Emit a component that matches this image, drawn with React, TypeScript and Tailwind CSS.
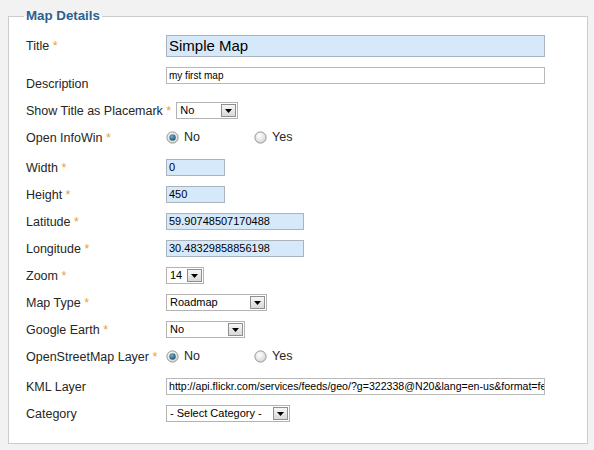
import React from "react";

const Label = ({ text, req, className = "" }: { text: string; req?: boolean; className?: string }) => (
  <div className={"min-w-[138px] mr-[4px] pl-[2px] shrink-0 whitespace-nowrap leading-[16px] text-[12.5px] text-[#262626] " + className}>
    {text}
    {req && <span className="text-[#e6a13c]"> *</span>}
  </div>
);

const TextBox = ({ value, w, blue = true, small = false }: { value: string; w: string; blue?: boolean; small?: boolean }) => (
  <div
    className={
      "h-[17px] pl-[2px] overflow-hidden whitespace-nowrap leading-[15px] text-black border " +
      w +
      (small ? " text-[10.6px]" : " text-[11px]") +
      (blue ? " bg-[#d6e9fb] border-[#a9b4bf]" : " bg-white border-[#b9b9b9]")
    }
  >
    {value}
  </div>
);

const Select = ({ value, w }: { value: string; w: string }) => (
  <div className={"h-[17px] flex border border-[#b3b3b3] bg-white " + w}>
    <div className="flex-1 pl-[3px] text-[11px] leading-[15px] text-black whitespace-nowrap overflow-hidden">
      {value}
    </div>
    <div className="m-[1px] w-[15px] border border-[#8f8f8f] bg-gradient-to-b from-[#f7f7f7] to-[#d9d9d9] flex items-center justify-center">
      <svg width="7" height="4" viewBox="0 0 7 4" className="mt-[1px]">
        <path d="M0 0h7L3.5 4z" fill="#000" />
      </svg>
    </div>
  </div>
);

const Radio = ({ checked }: { checked?: boolean }) => (
  <svg width="13" height="13" viewBox="0 0 13 13">
    <defs>
      <radialGradient id="rg" cx="40%" cy="35%" r="70%">
        <stop offset="0" stopColor="#ffffff" />
        <stop offset="1" stopColor="#d4d4d4" />
      </radialGradient>
      <radialGradient id="rd" cx="40%" cy="35%" r="70%">
        <stop offset="0" stopColor="#6fb0d2" />
        <stop offset="1" stopColor="#1c4c68" />
      </radialGradient>
    </defs>
    <circle cx="6.5" cy="6.5" r="5.6" fill="url(#rg)" stroke="#959595" strokeWidth="1" />
    {checked && <circle cx="6.5" cy="6.5" r="3.2" fill="url(#rd)" />}
  </svg>
);

const RadioPair = () => (
  <div className="flex items-center text-[12.5px] text-[#262626]">
    <div className="w-[88px] flex items-center gap-[5px]">
      <Radio checked />
      <span>No</span>
    </div>
    <div className="flex items-center gap-[5px]">
      <Radio />
      <span>Yes</span>
    </div>
  </div>
);

export default function App() {
  return (
    <div className="w-[594px] h-[450px] bg-[#f2f2f2] pt-[8px] pl-[8px] pr-[6px] font-['Liberation_Sans',Arial,sans-serif]">
      <fieldset className="border border-[#cccccc] bg-white pl-[15px] pb-[16px]">
        <legend className="px-[2px] text-[13.3px] leading-[16px] font-bold text-[#2c5f91]">Map Details</legend>
        <div className="pt-[9px]">
          <div className="flex items-center h-[26px]">
            <Label text="Title" req />
            <div className="w-[379px] h-[22px] pl-[2px] bg-[#d6e9fb] border border-[#a9b4bf] text-[15px] leading-[20px] text-black">
              Simple Map
            </div>
          </div>

          <div className="flex items-start h-[38px]">
            <Label text="Description" className="mt-[17px]" />
            <div className="mt-[8px]">
              <div className="w-[379px] h-[17px] pl-[2px] bg-white border border-[#b9b9b9] text-[10px] leading-[15px] text-black">
                my first map
              </div>
            </div>
          </div>

          <div className="flex items-center h-[27px]">
            <Label text="Show Title as Placemark" req />
            <div className="ml-[1px]">
              <Select value="No" w="w-[62px]" />
            </div>
          </div>

          <div className="flex items-center h-[27px]">
            <Label text="Open InfoWin" req />
            <RadioPair />
          </div>

          <div className="flex items-center h-[27px] mt-[3px]">
            <Label text="Width" req />
            <TextBox value="0" w="w-[59px]" />
          </div>

          <div className="flex items-center h-[27px]">
            <Label text="Height" req />
            <TextBox value="450" w="w-[59px]" />
          </div>

          <div className="flex items-center h-[27px]">
            <Label text="Latitude" req />
            <TextBox value="59.90748507170488" w="w-[138px]" />
          </div>

          <div className="flex items-center h-[27px]">
            <Label text="Longitude" req />
            <TextBox value="30.48329858856198" w="w-[138px]" />
          </div>

          <div className="flex items-center h-[27px]">
            <Label text="Zoom" req />
            <Select value="14" w="w-[38px]" />
          </div>

          <div className="flex items-center h-[27px]">
            <Label text="Map Type" req />
            <Select value="Roadmap" w="w-[101px]" />
          </div>

          <div className="flex items-center h-[27px]">
            <Label text="Google Earth" req />
            <Select value="No" w="w-[79px]" />
          </div>

          <div className="flex items-center h-[27px]">
            <Label text="OpenStreetMap Layer" req />
            <RadioPair />
          </div>

          <div className="flex items-center h-[27px] mt-[3px]">
            <Label text="KML Layer" />
            <TextBox
              value="http://api.flickr.com/services/feeds/geo/?g=322338@N20&lang=en-us&format=fee"
              w="w-[379px]"
              blue={false}
              small
            />
          </div>

          <div className="flex items-center h-[27px]">
            <Label text="Category" />
            <Select value="- Select Category -" w="w-[124px]" />
          </div>
        </div>
      </fieldset>
    </div>
  );
}
